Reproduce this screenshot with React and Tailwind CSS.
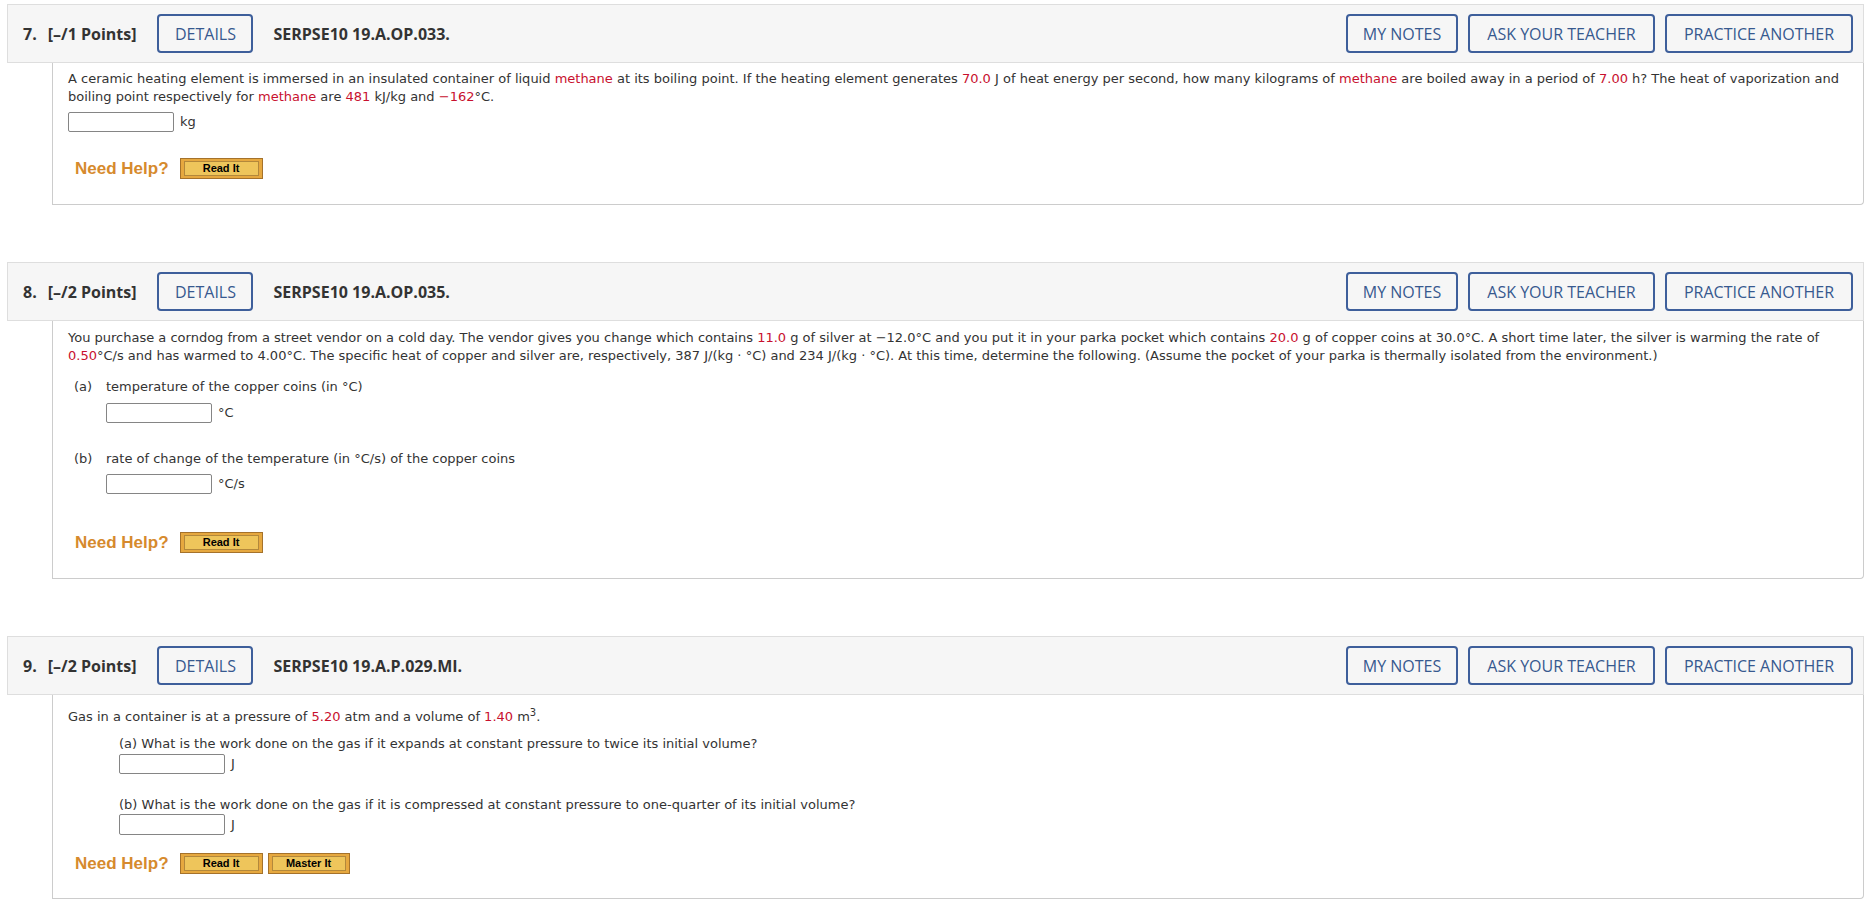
import React from "react";

const R = ({ children }) => <span className="text-[#c8102e]">{children}</span>;

function HeaderButton({ children, w }) {
  return (
    <button
      className={`flex h-[39px] ${w} items-center justify-center rounded-[4px] border-2 border-[#3e5f9b] text-[16px] text-[#37598f] font-['Open_Sans',sans-serif]`}
    >
      {children}
    </button>
  );
}

function Header({ num, points, code }) {
  return (
    <div className="flex items-center border border-[#dedede] bg-[#f6f6f6] py-[9px] pl-[15px] pr-[10px] font-['Open_Sans',sans-serif] text-[16px] text-[#333]">
      <span className="font-bold">{num}.</span>
      <span className="ml-[11px] font-bold">[–/{points} Points]</span>
      <div className="ml-[21px]">
        <HeaderButton w="w-[96px]">DETAILS</HeaderButton>
      </div>
      <span className="ml-[20px] font-bold">{code}</span>
      <div className="ml-auto flex gap-[10px]">
        <HeaderButton w="w-[112px]">MY NOTES</HeaderButton>
        <HeaderButton w="w-[187px]">ASK YOUR TEACHER</HeaderButton>
        <HeaderButton w="w-[188px]">PRACTICE ANOTHER</HeaderButton>
      </div>
    </div>
  );
}

function GoldButton({ children, w }) {
  return (
    <button
      className={`flex h-[21px] ${w} items-stretch border border-[#a5722b] bg-[#e6a83f] px-[3px] py-[2px]`}
    >
      <span className="flex flex-1 items-center justify-center border border-[#b3883b] bg-[#eec55b] text-[11px] font-bold leading-none text-black font-['Liberation_Sans',Arial,sans-serif]">
        {children}
      </span>
    </button>
  );
}

function NeedHelp({ master }) {
  return (
    <div className="flex h-[21px] items-center">
      <span className="ml-[7px] text-[17px] font-bold text-[#d68a2d] font-['Liberation_Sans',Arial,sans-serif]">
        Need Help?
      </span>
      <div className="ml-[11px] flex gap-[5px]">
        <GoldButton w="w-[83px]">Read It</GoldButton>
        {master && <GoldButton w="w-[82px]">Master It</GoldButton>}
      </div>
    </div>
  );
}

function Input({ unit, h = "h-[20px]" }) {
  return (
    <div className="flex items-center">
      <div className={`w-[106px] ${h} rounded-[2px] border border-[#858585] bg-white`}></div>
      <span className="ml-[6px]">{unit}</span>
    </div>
  );
}

function Body({ children, className }) {
  return (
    <div
      className={`ml-[45px] rounded-br-[4px] border border-t-0 border-[#cccccc] pl-[15px] pr-[14px] text-[13px] leading-[18px] text-[#333] font-['DejaVu_Sans',Verdana,sans-serif] ${className}`}
    >
      {children}
    </div>
  );
}

export default function App() {
  return (
    <div className="min-h-screen bg-white pl-[7px] pr-[9px] pt-[4px]">
      {/* Question 7 */}
      <div>
        <Header num="7" points="1" code="SERPSE10 19.A.OP.033." />
        <Body className="pt-[7px] pb-[25px]">
          <p>
            A ceramic heating element is immersed in an insulated container of liquid <R>methane</R> at its
            boiling point. If the heating element generates <R>70.0</R> J of heat energy per second, how many
            kilograms of <R>methane</R> are boiled away in a period of <R>7.00</R> h? The heat of vaporization and
            boiling point respectively for <R>methane</R> are <R>481</R> kJ/kg and <R>−162</R>°C.
          </p>
          <div className="mt-[6px]">
            <Input unit="kg" />
          </div>
          <div className="mt-[26px]">
            <NeedHelp />
          </div>
        </Body>
      </div>

      {/* Question 8 */}
      <div className="mt-[57px]">
        <Header num="8" points="2" code="SERPSE10 19.A.OP.035." />
        <Body className="pt-[8px] pb-[25px]">
          <p>
            You purchase a corndog from a street vendor on a cold day. The vendor gives you change which contains{" "}
            <R>11.0</R> g of silver at −12.0°C and you put it in your parka pocket which contains <R>20.0</R> g of
            copper coins at 30.0°C. A short time later, the silver is warming the rate of <R>0.50</R>°C/s and has
            warmed to 4.00°C. The specific heat of copper and silver are, respectively, 387 J/(kg · °C) and 234
            J/(kg · °C). At this time, determine the following. (Assume the pocket of your parka is thermally
            isolated from the environment.)
          </p>
          <div className="mt-[13px] flex">
            <span className="ml-[6px] w-[32px]">(a)</span>
            <span>temperature of the copper coins (in °C)</span>
          </div>
          <div className="ml-[38px] mt-[7px]">
            <Input unit="°C" />
          </div>
          <div className="mt-[27px] flex">
            <span className="ml-[6px] w-[32px]">(b)</span>
            <span>rate of change of the temperature (in °C/s) of the copper coins</span>
          </div>
          <div className="ml-[38px] mt-[6px]">
            <Input unit="°C/s" />
          </div>
          <div className="mt-[38px]">
            <NeedHelp />
          </div>
        </Body>
      </div>

      {/* Question 9 */}
      <div className="mt-[57px]">
        <Header num="9" points="2" code="SERPSE10 19.A.P.029.MI." />
        <Body className="pt-[13px] pb-[24px]">
          <p>
            Gas in a container is at a pressure of <R>5.20</R> atm and a volume of <R>1.40</R> m
            <sup className="text-[10px] leading-none">3</sup>.
          </p>
          <div className="ml-[51px] mt-[9px]">
            <p>(a) What is the work done on the gas if it expands at constant pressure to twice its initial volume?</p>
            <div className="mt-[1px]">
              <Input unit="J" />
            </div>
            <p className="mt-[22px]">
              (b) What is the work done on the gas if it is compressed at constant pressure to one-quarter of its
              initial volume?
            </p>
            <div className="mt-[0px]">
              <Input unit="J" h="h-[21px]" />
            </div>
          </div>
          <div className="mt-[18px]">
            <NeedHelp master />
          </div>
        </Body>
      </div>
    </div>
  );
}
